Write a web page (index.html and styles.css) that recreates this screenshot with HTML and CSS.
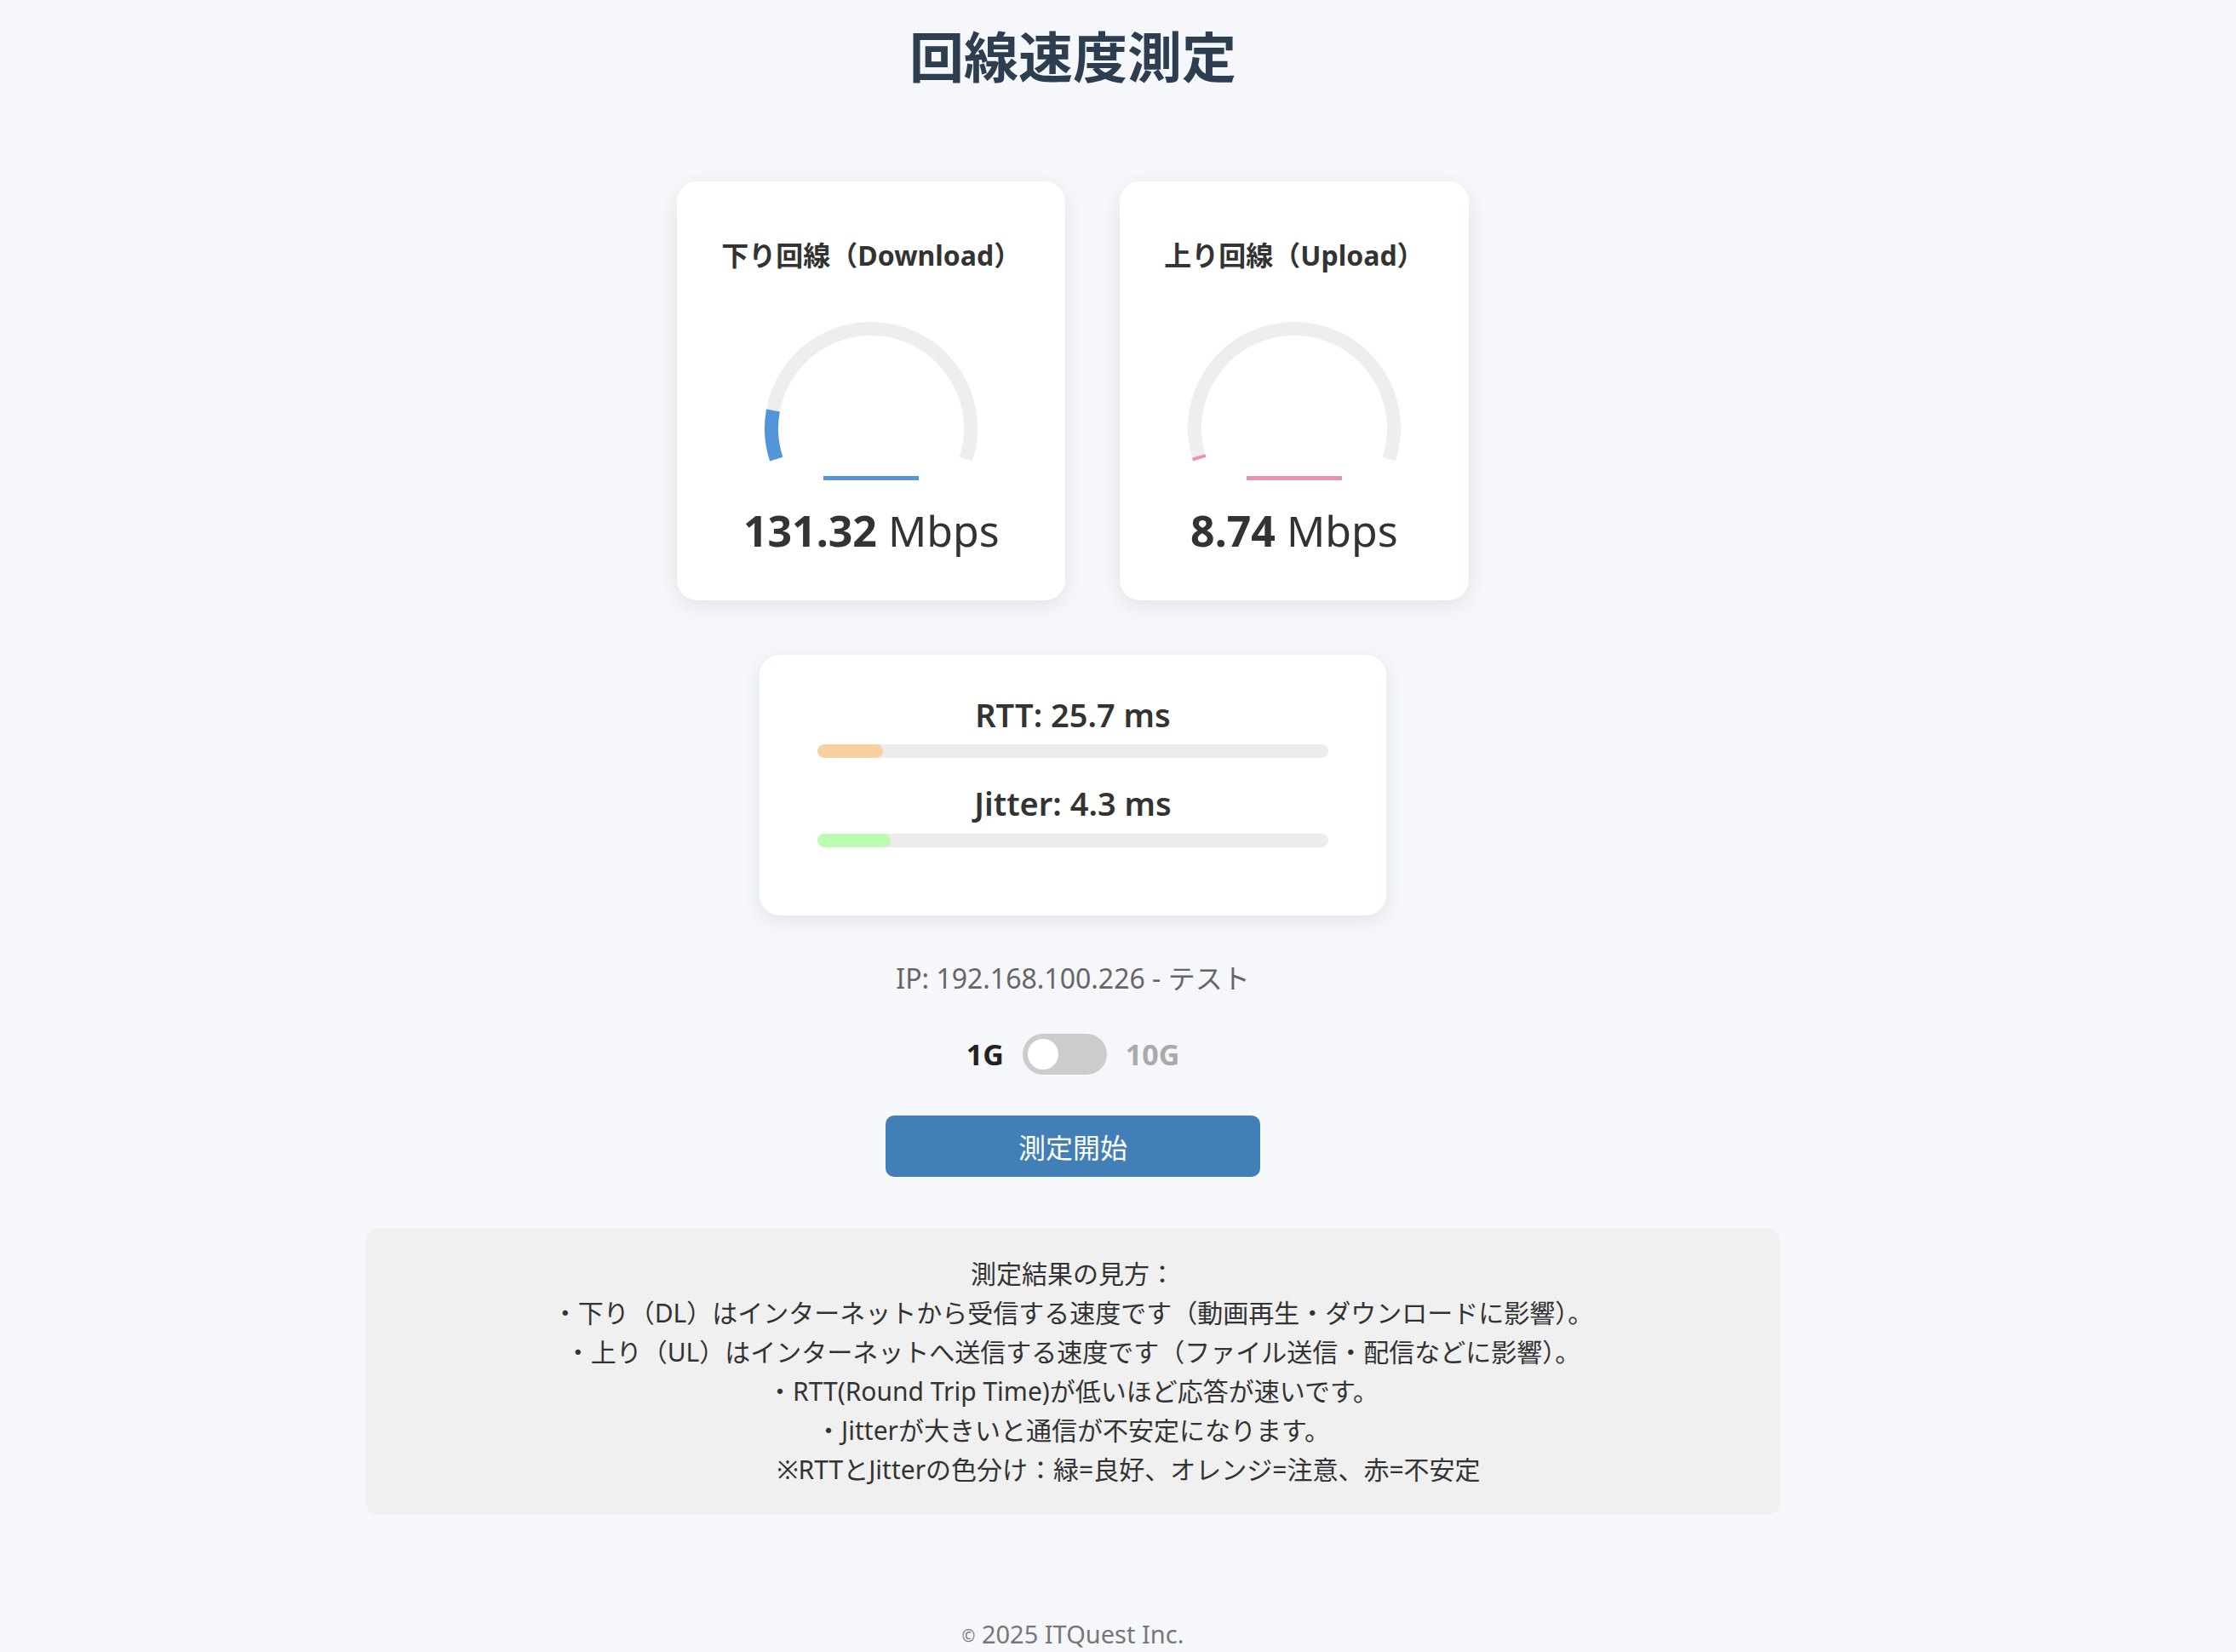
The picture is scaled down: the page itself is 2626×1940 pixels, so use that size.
FILE: index.html
```html
<!DOCTYPE html>
<html lang="ja">
  <head>
    <meta charset="UTF-8" />
    <meta name="viewport" content="width=device-width, initial-scale=1.0" />
    <title>回線速度測定</title>
    <link rel="stylesheet" href="styles.css">
  </head>
  <body>
    <div class="container">
      <h1 class="title">回線速度測定</h1>

      <div class="gauges">
        <div class="card">
          <h3>下り回線（Download）</h3>
          <svg class="gauge" width="260" height="210" viewBox="0 0 260 210">
            <path class="track" d="M 18.73 179.15 A 117 117 0 1 1 241.27 179.15" />
            <path class="fill dl" d="M 18.73 179.15 A 117 117 0 0 1 14.91 121.94" />
            <line class="needle dl" x1="74" y1="201.5" x2="186" y2="201.5" />
          </svg>
          <div class="value"><strong>131.32</strong> Mbps</div>
        </div>
        <div class="card">
          <h3>上り回線（Upload）</h3>
          <svg class="gauge" width="260" height="210" viewBox="0 0 260 210">
            <path class="track" d="M 18.73 179.15 A 117 117 0 1 1 241.27 179.15" />
            <path class="fill ul" d="M 18.73 179.15 A 117 117 0 0 1 17.6 175.47" />
            <line class="needle ul" x1="74" y1="201.5" x2="186" y2="201.5" />
          </svg>
          <div class="value"><strong>8.74</strong> Mbps</div>
        </div>
      </div>

      <div class="card stats">
        <div class="stat-label">RTT: 25.7 ms</div>
        <div class="bar"><div class="bar-fill rtt" style="width: 12.85%"></div></div>
        <div class="stat-label">Jitter: 4.3 ms</div>
        <div class="bar"><div class="bar-fill jitter" style="width: 14.3%"></div></div>
      </div>

      <p class="ip">IP: 192.168.100.226 - テスト</p>

      <div class="switch-row">
        <span class="speed active">1G</span>
        <label class="switch">
          <input type="checkbox" />
          <span class="knob"></span>
        </label>
        <span class="speed">10G</span>
      </div>

      <button class="start">測定開始</button>

      <div class="help">
        測定結果の見方：<br>
        ・下り（DL）はインターネットから受信する速度です（動画再生・ダウンロードに影響）。<br>
        ・上り（UL）はインターネットへ送信する速度です（ファイル送信・配信などに影響）。<br>
        ・RTT(Round Trip Time)が低いほど応答が速いです。<br>
        ・Jitterが大きいと通信が不安定になります。<br>
        <span class="note">※RTTとJitterの色分け：緑=良好、オレンジ=注意、赤=不安定</span>
      </div>

      <footer class="footer"><span class="copy">©</span> 2025 ITQuest Inc.</footer>
    </div>
  </body>
</html>
```

FILE: styles.css
```css
*,
::before,
::after {
  box-sizing: border-box;
}

body {
  margin: 0;
  padding-right: 106px;
  font-family: "Noto Sans", "Noto Sans CJK JP", sans-serif;
  background-color: #f5f7fa;
  color: #333;
}

.container {
  display: flex;
  flex-direction: column;
  align-items: center;
  text-align: center;
}

.title {
  margin: 27px 0 0;
  font-size: 64px;
  line-height: 80px;
  font-weight: 700;
  color: #2c3e50;
}

.gauges {
  display: flex;
  justify-content: center;
  align-items: flex-start;
  gap: 64px;
  margin-top: 106px;
}

.card {
  background: #fff;
  border-radius: 24px;
  box-shadow: 0 6px 22px rgba(30, 40, 60, 0.09);
  padding: 67px 52px 52px;
  display: flex;
  flex-direction: column;
  align-items: center;
}

.card h3 {
  margin: 0;
  font-size: 32px;
  line-height: 40px;
  font-weight: 700;
  color: #333;
  white-space: nowrap;
}

.gauge {
  display: block;
  margin-top: 40px;
}

.gauge .track,
.gauge .fill {
  fill: none;
  stroke-width: 16;
}

.gauge .track {
  stroke: #eeeeee;
}

.gauge .needle {
  stroke-width: 5;
}

.dl {
  stroke: #5495d7;
}

.ul {
  stroke: #e893b2;
}

.value {
  margin-top: 23px;
  font-size: 50px;
  line-height: 60px;
  color: #333;
}

.value strong {
  font-weight: 700;
}

/* rtt / jitter */
.card.stats {
  margin-top: 64px;
  width: 736px;
  padding: 47px 68px 80px;
  align-items: stretch;
}

.stat-label {
  font-size: 38px;
  line-height: 46px;
  font-weight: 600;
  color: #333;
}

.bar {
  height: 16px;
  margin: 12px 0 30px;
  border-radius: 8px;
  background: #ececec;
  overflow: hidden;
}

.bar:last-child {
  margin: 13px 0 0;
}

.bar-fill {
  height: 100%;
  border-radius: 8px;
}

.bar-fill.rtt {
  background: #f7cfa1;
}

.bar-fill.jitter {
  background: #bcfcb1;
}

.ip {
  margin: 54px 0 0;
  font-size: 32px;
  line-height: 40px;
  color: #666;
}

.switch-row {
  display: flex;
  align-items: center;
  gap: 22px;
  margin-top: 45px;
}

.speed {
  font-size: 34px;
  font-weight: 700;
  color: #aaa;
}

.speed.active {
  color: #222;
}

.switch {
  position: relative;
  display: block;
  width: 99px;
  height: 48px;
  border-radius: 24px;
  background: #ccc;
}

.switch input {
  display: none;
}

.knob {
  position: absolute;
  top: 6px;
  left: 6px;
  width: 36px;
  height: 36px;
  border-radius: 50%;
  background: #fff;
}

.start {
  margin-top: 48px;
  width: 440px;
  height: 72px;
  border: none;
  border-radius: 10px;
  background: #427fb7;
  color: #fff;
  font-family: inherit;
  font-size: 32px;
}

.help {
  margin-top: 61px;
  width: 1660px;
  padding: 30px;
  border-radius: 14px;
  background: #f0f0f0;
  font-size: 30px;
  line-height: 46px;
  color: #333;
}

.help .note {
  padding-left: 131px;
}

.footer {
  margin-top: 120px;
  font-size: 29px;
  line-height: 40px;
  color: #777;
}

.footer .copy {
  font-size: 19px;
  vertical-align: 2px;
}
```
